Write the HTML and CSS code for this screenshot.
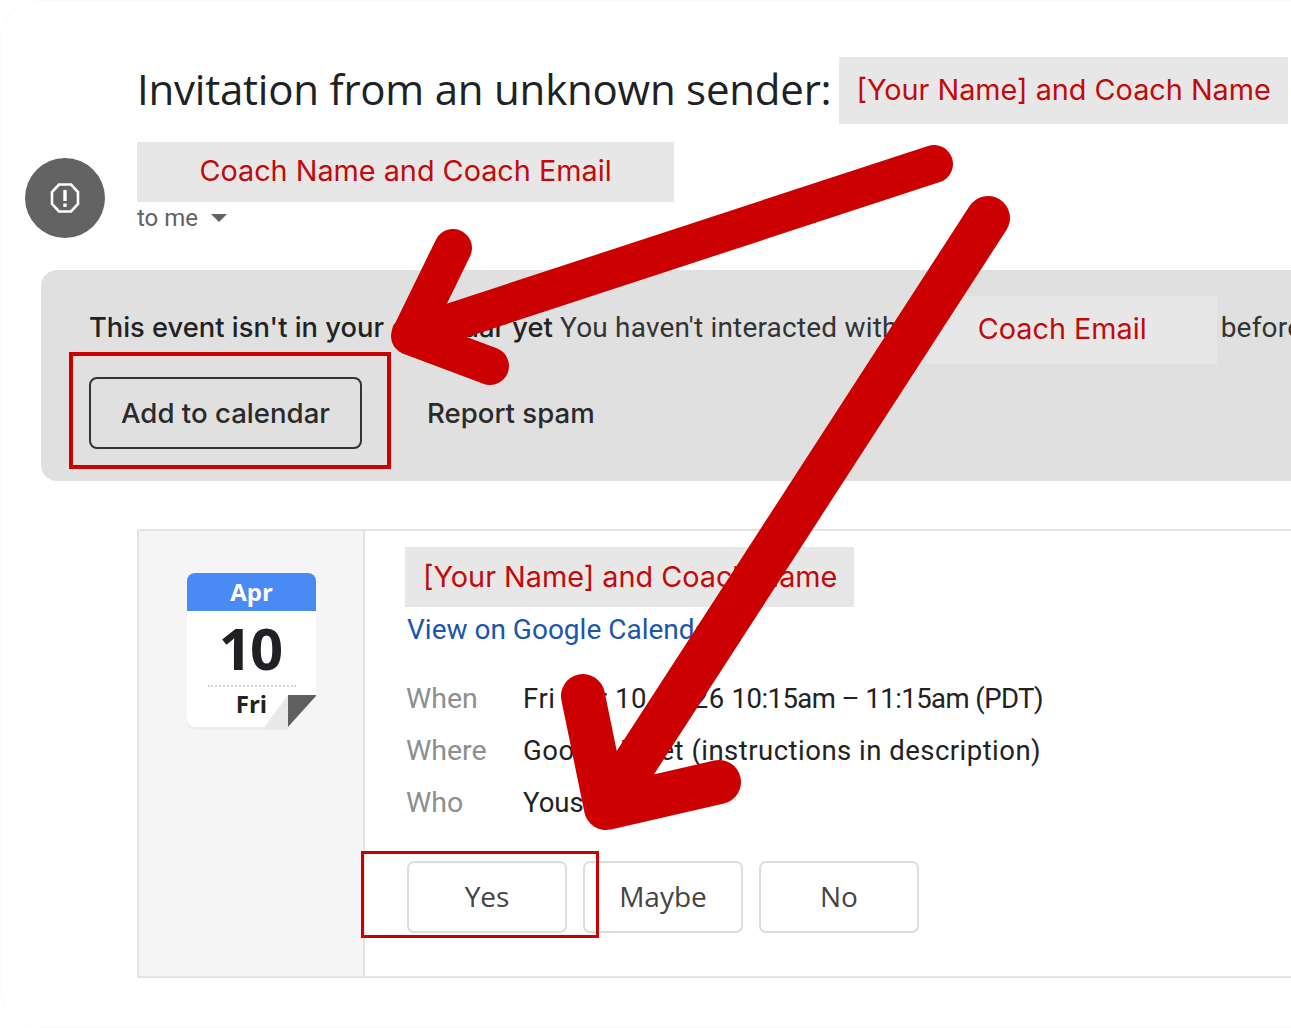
FILE: index.html
```html
<!DOCTYPE html>
<html>
    <head>
        <title>Invitation from an unknown sender</title>
        <link rel="stylesheet" href="styles.css">
    </head>
    <body>
        <div class="page">
            <div class="subject">
                <h1>Invitation from an unknown sender:</h1>
                <span class="mask subject-mask">[Your Name] and Coach Name</span>
                <span class="subject-rest">(</span>
            </div>

            <div class="sender">
                <div class="avatar">
                    <svg width="34" height="34" viewBox="0 0 34 34">
                        <path class="avatar-octagon" d="M11 3.5h12l7 7.5v12l-7 7.5h-12l-7-7.5v-12z"/>
                        <path class="avatar-mark" d="M15.3 9h3.4v11h-3.4zM15.3 22.5h3.4v3.4h-3.4z"/>
                    </svg>
                </div>
                <div class="sender-text">
                    <div class="mask sender-mask">Coach Name and Coach Email</div>
                    <div class="to-me">to me <span class="caret"></span></div>
                </div>
            </div>

            <div class="banner">
                <div class="banner-line">
                    <strong>This event isn't in your calendar yet</strong>
                    <span class="banner-note">You haven't interacted with</span>
                    <span class="mask email-mask">Coach Email</span>
                    <span class="banner-note">before</span>
                </div>
                <div class="banner-actions">
                    <button class="add-btn">Add to calendar</button>
                    <button class="spam-btn">Report spam</button>
                </div>
                <div class="red-box add-box"></div>
            </div>

            <div class="card">
                <div class="card-date">
                    <div class="calendar">
                        <div class="cal-month">Apr</div>
                        <div class="cal-day">10</div>
                        <div class="cal-week">Fri</div>
                        <svg class="cal-fold" width="56" height="40" viewBox="0 0 56 40">
                            <path d="M28 38 L57 4 V40 H28Z" fill="#f5f5f5"/>
                            <path d="M3 38 L28 4 V38Z" fill="#e8e8e8"/>
                            <path d="M28 4 H57 L28 36Z" fill="#5f5f5f"/>
                        </svg>
                    </div>
                </div>
                <div class="card-main">
                    <div class="mask title-mask">[Your Name] and Coach Name</div>
                    <a class="cal-link" href="#">View on Google Calendar</a>
                    <div class="details">
                        <span class="label">When</span>
                        <span><span class="when-date">Fri Apr 10, 2026</span> <span class="when-time">10:15am – 11:15am (PDT)</span></span>
                        <span class="label">Where</span>
                        <span class="where">Google Meet (instructions in description)</span>
                        <span class="label">Who</span>
                        <span>Yous</span>
                    </div>
                    <div class="rsvp">
                        <button class="rsvp-btn">Yes</button>
                        <button class="rsvp-btn">Maybe</button>
                        <button class="rsvp-btn">No</button>
                        <div class="red-box yes-box"></div>
                    </div>
                </div>
            </div>

            <svg class="arrows" width="1291" height="1028" viewBox="0 0 1291 1028">
                <path d="M934 164 L412 335 M453 248 L410 336 L490 366"/>
                <path class="arrow-long" d="M988 218 L606 808 M583 696 L606 808 L719 782"/>
            </svg>
        </div>
    </body>
</html>
```

FILE: styles.css
```css
html, body {
    margin: 0;
    height: 100%;
    overflow: hidden;
    background-color: #ffffff;
}
.page {
    position: relative;
    box-sizing: border-box;
    width: 1291px;
    height: 1028px;
    padding: 56px 0 0 40px;
    overflow: hidden;
    border: solid #fafafa;
    border-width: 1px 0 1px 1px;
    border-radius: 40px 0 0 40px;
    font-family: Roboto, sans-serif;
    color: #222;
}
.mask {
    background-color: #e7e7e7;
    color: #c20a0a;
    font-family: Inter, sans-serif;
    white-space: nowrap;
}

/* subject line */
.subject {
    display: flex;
    align-items: center;
    height: 67px;
    margin-left: 96px;
    white-space: nowrap;
}
h1 {
    margin: -4px 8px 0 0;
    font-family: "Open Sans", sans-serif;
    font-size: 42px;
    font-weight: 400;
    letter-spacing: -0.22px;
    color: #202124;
}
.subject-mask {
    flex: none;
    box-sizing: border-box;
    width: 449px;
    height: 67px;
    line-height: 65px;
    padding-left: 17px;
    font-size: 28.8px;
}
.subject-rest {
    margin-left: 1px;
    font-size: 28px;
}

/* sender */
.sender {
    display: flex;
    margin: 18px 0 0 -16px;
}
.avatar {
    display: flex;
    align-items: center;
    justify-content: center;
    flex: none;
    width: 80px;
    height: 80px;
    margin-top: 16px;
    border-radius: 50%;
    background-color: #636363;
}
.avatar-octagon {
    fill: none;
    stroke: #ffffff;
    stroke-width: 2.6;
}
.avatar-mark {
    fill: #ffffff;
}
.sender-text {
    margin-left: 32px;
}
.sender-mask {
    width: 537px;
    height: 60px;
    line-height: 57px;
    text-align: center;
    font-size: 28.8px;
}
.to-me {
    margin-top: 1px;
    font-size: 24px;
    line-height: 30px;
    color: #5f6368;
}
.caret {
    display: inline-block;
    width: 0;
    height: 0;
    margin-left: 7px;
    vertical-align: 4px;
    border-left: 8px solid transparent;
    border-right: 8px solid transparent;
    border-top: 8px solid #5f6368;
}

/* warning banner */
.banner {
    position: relative;
    box-sizing: border-box;
    width: 1300px;
    height: 211px;
    margin-top: 32px;
    padding: 26px 0 0 48px;
    border-radius: 16px;
    background-color: #e0e0e0;
}
.banner-line {
    display: flex;
    align-items: center;
    height: 68px;
    font-size: 28px;
    white-space: nowrap;
}
.banner-line strong {
    flex: none;
    width: 471px;
    margin-top: -6px;
    font-family: Inter, sans-serif;
    font-size: 27.3px;
    font-weight: 500;
    letter-spacing: 0;
}
.banner-note {
    margin-top: -5px;
    letter-spacing: 0.2px;
    color: #333;
}
.email-mask {
    box-sizing: border-box;
    flex: none;
    width: 291px;
    height: 68px;
    line-height: 66px;
    margin-left: 28px;
    margin-top: 0;
    padding-left: 52px;
    font-size: 28.8px;
}
.email-mask + .banner-note {
    margin-left: 4px;
}
.banner-actions {
    display: flex;
    align-items: center;
    gap: 65px;
    margin-top: 13px;
}
button {
    font-family: Inter, sans-serif;
    cursor: pointer;
}
.add-btn {
    box-sizing: border-box;
    width: 273px;
    height: 72px;
    padding-bottom: 1px;
    border: 2px solid #333;
    border-radius: 8px;
    background: none;
    font-size: 27.6px;
    font-weight: 500;
    color: #2a2a2a;
}
.spam-btn {
    padding: 0 0 1px;
    border: none;
    background: none;
    font-size: 27.6px;
    font-weight: 500;
    color: #2a2a2a;
}
.red-box {
    position: absolute;
    box-sizing: border-box;
    border: 3px solid #cc0000;
}
.add-box {
    left: 28px;
    top: 82px;
    width: 322px;
    height: 117px;
    border-width: 4px;
}

/* invitation card */
.card {
    display: flex;
    box-sizing: border-box;
    width: 1200px;
    height: 449px;
    margin: 48px 0 0 96px;
    border: 2px solid #e3e3e3;
    border-right: none;
}
.card-date {
    flex: none;
    box-sizing: border-box;
    width: 226px;
    padding: 42px 0 0 48px;
    border-right: 2px solid #e3e3e3;
    background-color: #f5f5f5;
}
.calendar {
    position: relative;
    width: 129px;
    height: 154px;
    border-radius: 8px;
    background-color: #ffffff;
    box-shadow: 0 3px 0 #ececec;
    text-align: center;
}
.cal-month {
    height: 38px;
    line-height: 37px;
    border-radius: 8px 8px 0 0;
    background-color: #4a8af4;
    color: #ffffff;
    font-family: "Open Sans", sans-serif;
    font-size: 24px;
    font-weight: 700;
}
.cal-day {
    width: 88px;
    height: 70px;
    margin: 0 auto;
    padding-top: 4px;
    line-height: 66px;
    border-bottom: 2px dotted #d6d6d6;
    color: #202124;
    font-family: "Open Sans", sans-serif;
    font-size: 58px;
    font-weight: 700;
    letter-spacing: -2px;
    text-indent: -3px;
}
.cal-week {
    line-height: 34px;
    font-family: "Open Sans", sans-serif;
    font-size: 24px;
    font-weight: 700;
    color: #222;
}
.cal-fold {
    position: absolute;
    right: 0;
    bottom: -4px;
}
.card-main {
    flex: 1;
    padding: 16px 0 0 40px;
}
.title-mask {
    box-sizing: border-box;
    width: 449px;
    height: 60px;
    line-height: 59px;
    padding-left: 18px;
    font-size: 28.8px;
}
.cal-link {
    display: block;
    height: 46px;
    margin-left: 2px;
    line-height: 46px;
    color: #1a56b0;
    font-size: 28px;
    text-decoration: none;
}
.details {
    display: grid;
    grid-template-columns: 117px 1fr;
    grid-auto-rows: 52px;
    align-items: center;
    margin: 19px 0 0 1px;
    font-size: 27.5px;
    color: #222;
}
.label {
    font-size: 28.5px;
    color: #8e8e8e;
}
.when-date {
    letter-spacing: 0.6px;
}
.when-time {
    letter-spacing: -0.55px;
}
.where {
    letter-spacing: 0.48px;
}
.rsvp {
    position: relative;
    display: flex;
    gap: 16px;
    margin: 33px 0 0 2px;
}
.rsvp-btn {
    width: 160px;
    height: 72px;
    padding-bottom: 4px;
    border: 2px solid #dddddd;
    border-radius: 7px;
    background-color: #ffffff;
    font-family: "Open Sans", sans-serif;
    font-size: 28px;
    color: #444;
}
.yes-box {
    left: -46px;
    top: -10px;
    width: 238px;
    height: 87px;
}

/* hand drawn arrows over the screenshot */
.arrows {
    position: absolute;
    left: -1px;
    top: -1px;
    pointer-events: none;
}
.arrows path {
    fill: none;
    stroke: #cc0000;
    stroke-width: 38;
    stroke-linecap: round;
    stroke-linejoin: round;
}
.arrows .arrow-long {
    stroke-width: 44;
}
```
